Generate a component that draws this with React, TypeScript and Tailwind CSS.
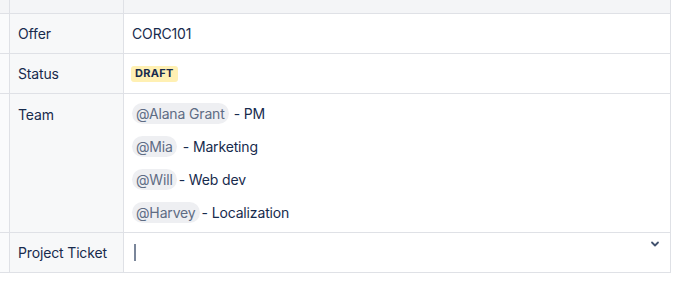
const team = [
  { name: '@Alana Grant', role: ' - PM', gap: 'ml-[5px]' },
  { name: '@Mia', role: ' - Marketing', gap: 'ml-[6px]' },
  { name: '@Will', role: ' - Web dev', gap: 'ml-[2px]' },
  { name: '@Harvey', role: ' - Localization', gap: 'ml-[2px]' },
]

function Mention({ name }: { name: string }) {
  return (
    <span className="inline-flex h-[21px] items-center rounded-full bg-[#eeeff2] px-1 text-[#5e6c84]">
      {name}
    </span>
  )
}

export default function App() {
  return (
    <div className="h-[284px] w-[676px] bg-white font-['Inter','Noto_Sans',sans-serif] text-[14px] tracking-[-0.15px] text-[#172b4d]">
      <div className="grid grid-cols-[10px_114px_547px]">
        {/* header strip */}
        <div className="h-[14px] border-b border-r border-[#dfe1e6] bg-[#f4f5f7]" />
        <div className="h-[14px] border-b border-r border-[#dfe1e6] bg-[#f4f5f7]" />
        <div className="h-[14px] border-b border-r border-[#dfe1e6] bg-[#f4f5f7]" />

        {/* Offer */}
        <div className="border-b border-r border-[#dfe1e6] bg-[#fafbfc]" />
        <div className="flex h-[40px] items-center border-b border-r border-[#dfe1e6] bg-[#f7f8f9] pl-[8px]">Offer</div>
        <div className="flex h-[40px] items-center border-b border-r border-[#dfe1e6] pl-[8px]">CORC101</div>

        {/* Status */}
        <div className="border-b border-r border-[#dfe1e6] bg-[#fafbfc]" />
        <div className="flex h-[40px] items-center border-b border-r border-[#dfe1e6] bg-[#f7f8f9] pl-[8px]">Status</div>
        <div className="flex h-[40px] items-center border-b border-r border-[#dfe1e6] pl-[7px]">
          <span className="inline-flex h-[16px] items-center rounded-[3px] bg-[#fff0b3] px-[4px] text-[11px] font-bold tracking-[0.3px] text-[#172b4d]">
            DRAFT
          </span>
        </div>

        {/* Team */}
        <div className="border-b border-r border-[#dfe1e6] bg-[#fafbfc]" />
        <div className="h-[139px] border-b border-r border-[#dfe1e6] bg-[#f7f8f9] pl-[8px] pt-[8px]">
          <div className="flex h-[24px] items-center">Team</div>
        </div>
        <div className="flex h-[139px] flex-col gap-[9px] border-b border-r border-[#dfe1e6] pl-[8px] pt-[7px]">
          {team.map((m) => (
            <div key={m.name} className="flex h-[24px] items-center">
              <Mention name={m.name} />
              <span className={m.gap}>{m.role}</span>
            </div>
          ))}
        </div>

        {/* Project Ticket */}
        <div className="border-b border-r border-[#dfe1e6] bg-[#fafbfc]" />
        <div className="flex h-[40px] items-center border-b border-r border-[#dfe1e6] bg-[#f7f8f9] pl-[8px]">Project Ticket</div>
        <div className="flex h-[40px] items-center justify-between border-b border-r border-[#dfe1e6] pl-[10px] pr-[9px]">
          <span className="h-[17px] w-[2px] bg-[#7a869a]" />
          <svg width="12" height="12" viewBox="0 0 24 24" className="mb-[18px] text-[#42526e]">
            <path d="M6 9l6 6 6-6" fill="none" stroke="currentColor" strokeWidth="3.6" strokeLinecap="round" strokeLinejoin="round" />
          </svg>
        </div>
      </div>
    </div>
  )
}
